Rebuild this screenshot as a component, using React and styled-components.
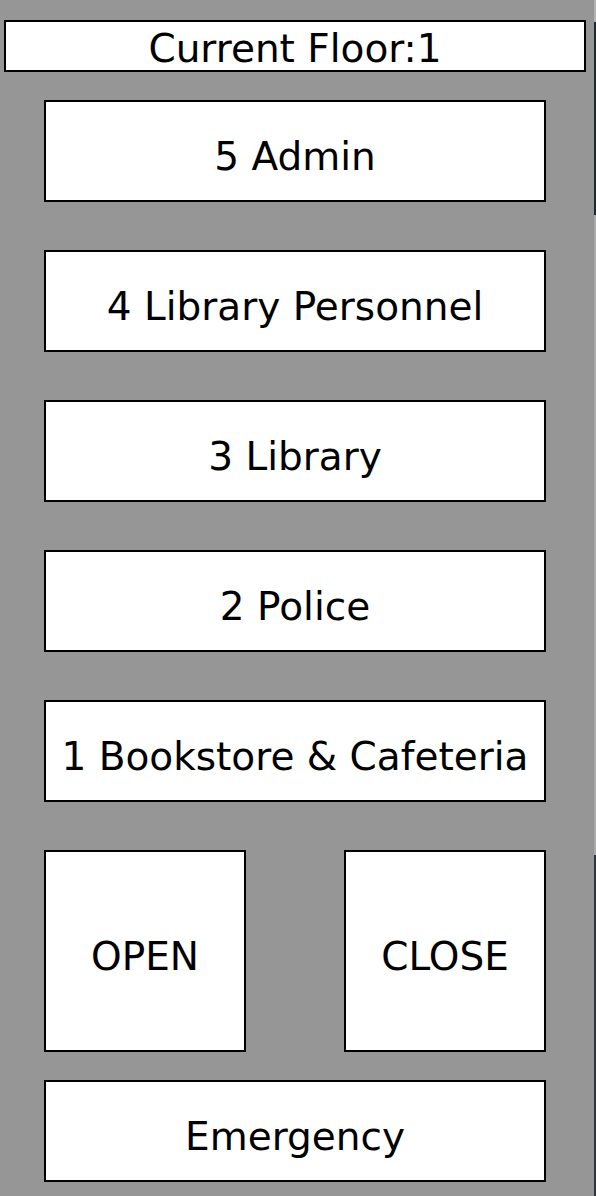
import React from "react";
import styled, { createGlobalStyle } from "styled-components";

const GlobalStyle = createGlobalStyle`
  html, body {
    margin: 0;
    padding: 0;
  }
  body {
    min-height: 1196px;
    background:
      linear-gradient(
        to bottom,
        #b4b4b4 0 22px,
        #1d2731 22px 215px,
        #a9a9a9 215px 855px,
        #2b3643 855px
      ) right top / 2px 100% no-repeat,
      #969696;
    font-family: "DejaVu Sans", "Liberation Sans", sans-serif;
  }
`;

const Panel = styled.div`
  display: flex;
  flex-direction: column;
  align-items: flex-start;
  padding-top: 20px;
`;

const FloorDisplay = styled.div`
  box-sizing: border-box;
  margin-left: 4px;
  width: 582px;
  height: 52px;
  border: 2px solid #000;
  background: #fff;
  color: #000;
  font-size: 39px;
  line-height: 1;
  display: flex;
  align-items: center;
  justify-content: center;
  padding-top: 4px;
`;

const Controls = styled.div`
  display: flex;
  flex-direction: column;
  margin-top: 28px;
  margin-left: 44px;
  width: 502px;
`;

const FloorList = styled.div`
  display: flex;
  flex-direction: column;
  gap: 48px;
`;

const PanelButton = styled.button`
  box-sizing: border-box;
  width: ${(p) => p.$w || 502}px;
  height: ${(p) => p.$h || 102}px;
  border: 2px solid #000;
  border-radius: 0;
  background: #fff;
  color: #000;
  font-family: "DejaVu Sans", "Liberation Sans", sans-serif;
  font-size: 39px;
  line-height: 1;
  margin: 0;
  padding: 10px 0 0;
  display: flex;
  align-items: center;
  justify-content: center;
  cursor: pointer;
`;

const DoorRow = styled.div`
  display: flex;
  justify-content: space-between;
  margin-top: 48px;
`;

const EmergencyRow = styled.div`
  margin-top: 28px;
`;

const floors = [
  "5 Admin",
  "4 Library Personnel",
  "3 Library",
  "2 Police",
  "1 Bookstore & Cafeteria",
];

export default function App() {
  return (
    <>
      <GlobalStyle />
      <Panel>
        <FloorDisplay>Current Floor:1</FloorDisplay>
        <Controls>
          <FloorList>
            {floors.map((f) => (
              <PanelButton key={f}>{f}</PanelButton>
            ))}
          </FloorList>
          <DoorRow>
            <PanelButton $w={202} $h={202}>OPEN</PanelButton>
            <PanelButton $w={202} $h={202}>CLOSE</PanelButton>
          </DoorRow>
          <EmergencyRow>
            <PanelButton>Emergency</PanelButton>
          </EmergencyRow>
        </Controls>
      </Panel>
    </>
  );
}
